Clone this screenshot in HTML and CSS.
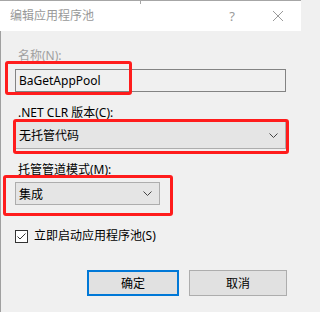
FILE: index.html
```html
<!DOCTYPE html>
<html lang="zh-CN">
<head>
<meta charset="utf-8">
<title>编辑应用程序池</title>
<link rel="stylesheet" href="styles.css">
</head>
<body>
<div class="window">
  <div class="titlebar">
    <span class="title">编辑应用程序池</span>
    <div class="caption-btns">
      <span class="help">?</span>
      <svg class="close" width="12" height="12" viewBox="0 0 12 12"><path d="M1 1 L11 11 M11 1 L1 11" stroke="#9a9a9a" stroke-width="1" fill="none"/></svg>
    </div>
  </div>
  <div class="content">
    <div class="lbl lbl-disabled lbl-name">名称(N):</div>
    <div class="textbox">BaGetAppPool</div>

    <div class="lbl lbl-clr">.NET CLR 版本(C):</div>
    <div class="combo combo-clr">
      <span>无托管代码</span>
      <svg class="chev" width="9" height="5" viewBox="0 0 9 5"><path d="M0.5 0.5 L4.5 4.5 L8.5 0.5" stroke="#444" stroke-width="1" fill="none"/></svg>
    </div>

    <div class="lbl lbl-mode">托管管道模式(M):</div>
    <div class="combo combo-mode">
      <span>集成</span>
      <svg class="chev" width="9" height="5" viewBox="0 0 9 5"><path d="M0.5 0.5 L4.5 4.5 L8.5 0.5" stroke="#444" stroke-width="1" fill="none"/></svg>
    </div>

    <div class="check-row">
      <svg class="checkbox" width="13" height="13" viewBox="0 0 13 13"><rect x="0.5" y="0.5" width="12" height="12" fill="#fff" stroke="#333"/><path d="M2.5 6.5 L5 9 L10.5 3.5" stroke="#333" stroke-width="1" fill="none"/></svg>
      <span>立即启动应用程序池(S)</span>
    </div>

    <div class="buttons">
      <div class="btn btn-default">确定</div>
      <div class="btn btn-cancel">取消</div>
    </div>

    <div class="hl hl-name"></div>
    <div class="hl hl-clr"></div>
    <div class="hl hl-mode"></div>
  </div>
</div>
</body>
</html>
```
FILE: styles.css
```css
* { box-sizing: border-box; }
html, body {
  margin: 0;
  padding: 0;
  width: 301px;
  height: 312px;
  overflow: hidden;
  background: #f0f0f0;
}
body {
  font-family: "Noto Sans", "Noto Sans CJK SC", sans-serif;
  font-size: 12px;
  color: #000;
}
.window {
  width: 301px;
  height: 312px;
  display: flex;
  flex-direction: column;
}
.titlebar {
  height: 31px;
  flex: none;
  border-top: 1px solid #a6a6a6;
  background: linear-gradient(#a6a6a6, #a6a6a6) 140px 0 / 1px 3px no-repeat, #fff;
  display: flex;
  align-items: center;
  padding-left: 10px;
}
.title {
  color: #999;
  font-size: 12px;
  line-height: 16px;
  flex: 1;
}
.caption-btns {
  display: flex;
  align-items: center;
  gap: 37px;
  padding-right: 17px;
}
.help {
  color: #9a9a9a;
  font-size: 13px;
  line-height: 16px;
}
.close { display: block; }
.content {
  position: relative;
  flex: 1;
  border-left: 1px solid #a0a0a0;
  padding: 17px 0 0 14px;
  display: flex;
  flex-direction: column;
  align-items: flex-start;
}
.lbl {
  line-height: 16px;
  margin-left: 3px;
}
.lbl-disabled { color: #a0a0a0; }
.textbox {
  margin-top: 5px;
  width: 271px;
  height: 23px;
  border: 1px solid #838383;
  background: #f0f0f0;
  padding-left: 3px;
  line-height: 21px;
}
.lbl-clr { margin-top: 13px; }
.combo {
  display: flex;
  align-items: center;
  justify-content: space-between;
  border: 1px solid #adadad;
  background: #e5e5e5;
  padding: 0 7px 0 3px;
}
.combo-clr {
  width: 271px;
  height: 28px;
}
.lbl-mode { margin-top: 13px; }
.combo-mode {
  margin-top: 4px;
  width: 145px;
  height: 23px;
}
.chev { display: block; }
.check-row {
  margin-top: 23px;
  display: flex;
  align-items: center;
  gap: 6px;
  line-height: 16px;
}
.checkbox { display: block; }
.buttons {
  margin-top: 26px;
  width: 272px;
  display: flex;
  justify-content: flex-end;
  gap: 10px;
}
.btn {
  height: 26px;
  background: #e1e1e1;
  border: 1px solid #adadad;
  display: flex;
  align-items: center;
  justify-content: center;
}
.btn-default {
  width: 92px;
  border: 2px solid #0078d7;
}
.btn-cancel { width: 98px; }
.hl {
  position: absolute;
  border: 3px solid #ff1c1c;
  border-radius: 3px;
}
.hl-name { left: 4px; top: 30px; width: 127px; height: 34px; }
.hl-clr { left: 12px; top: 88px; width: 276px; height: 35px; }
.hl-mode { left: 2px; top: 144px; width: 170px; height: 41px; }
```
